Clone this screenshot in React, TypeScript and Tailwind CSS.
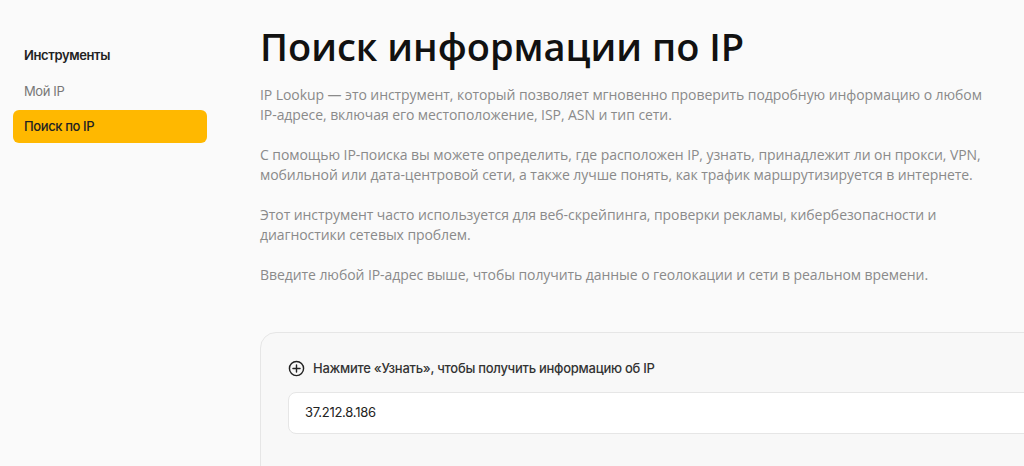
export default function App() {
  return (
    <div className="flex h-[466px] w-[1024px] overflow-hidden bg-[#fafafa] font-['Open_Sans',sans-serif]">
      <aside className="w-[207px] shrink-0 pl-[13px] pt-[46px] font-['Inter',sans-serif] text-[13px] tracking-[-0.03em]">
        <div className="px-[11px] font-semibold text-[#222]">Инструменты</div>
        <div className="mt-[16px] px-[11px] text-[#777]">Мой IP</div>
        <div className="mt-[9px] flex h-[33px] items-center rounded-md bg-[#ffb800] px-[11px] font-medium text-[#222]">
          Поиск по IP
        </div>
      </aside>
      <main className="ml-[53px] w-[820px] shrink-0 pt-[20px]">
        <h1 className="text-[38px] font-semibold leading-[52px] text-[#111]">Поиск информации по IP</h1>
        <div className="mt-[13px] w-[735px] space-y-[20px] text-[14px] leading-[20px] tracking-[-0.005em] text-[#8a8a8a]">
          <p>
            IP Lookup — это инструмент, который позволяет мгновенно проверить подробную информацию о любом
            IP-адресе, включая его местоположение, ISP, ASN и тип сети.
          </p>
          <p>
            С помощью IP-поиска вы можете определить, где расположен IP, узнать, принадлежит ли он прокси, VPN,
            мобильной или дата-центровой сети, а также лучше понять, как трафик маршрутизируется в интернете.
          </p>
          <p>
            Этот инструмент часто используется для веб-скрейпинга, проверки рекламы, кибербезопасности и
            диагностики сетевых проблем.
          </p>
          <p>Введите любой IP-адрес выше, чтобы получить данные о геолокации и сети в реальном времени.</p>
        </div>
        <section className="mt-[47px] h-[200px] rounded-2xl border border-[#e6e6e6] bg-[#f8f8f8] px-[27px] pt-[26px] font-['Inter',sans-serif]">
          <div className="flex items-center gap-[8px] text-[13px] font-medium tracking-[-0.02em] text-[#333]">
            <svg width="17" height="17" viewBox="0 0 24 24" fill="none" stroke="#222" strokeWidth="2" strokeLinecap="round">
              <circle cx="12" cy="12" r="10" />
              <path d="M12 7v10M7 12h10" />
            </svg>
            <span>Нажмите «Узнать», чтобы получить информацию об IP</span>
          </div>
          <div className="mt-[13px] flex h-[42px] items-center rounded-lg border border-[#e6e6e6] bg-white px-[16px] text-[13px] tracking-[-0.02em] text-[#222]">
            37.212.8.186
          </div>
        </section>
      </main>
    </div>
  )
}
